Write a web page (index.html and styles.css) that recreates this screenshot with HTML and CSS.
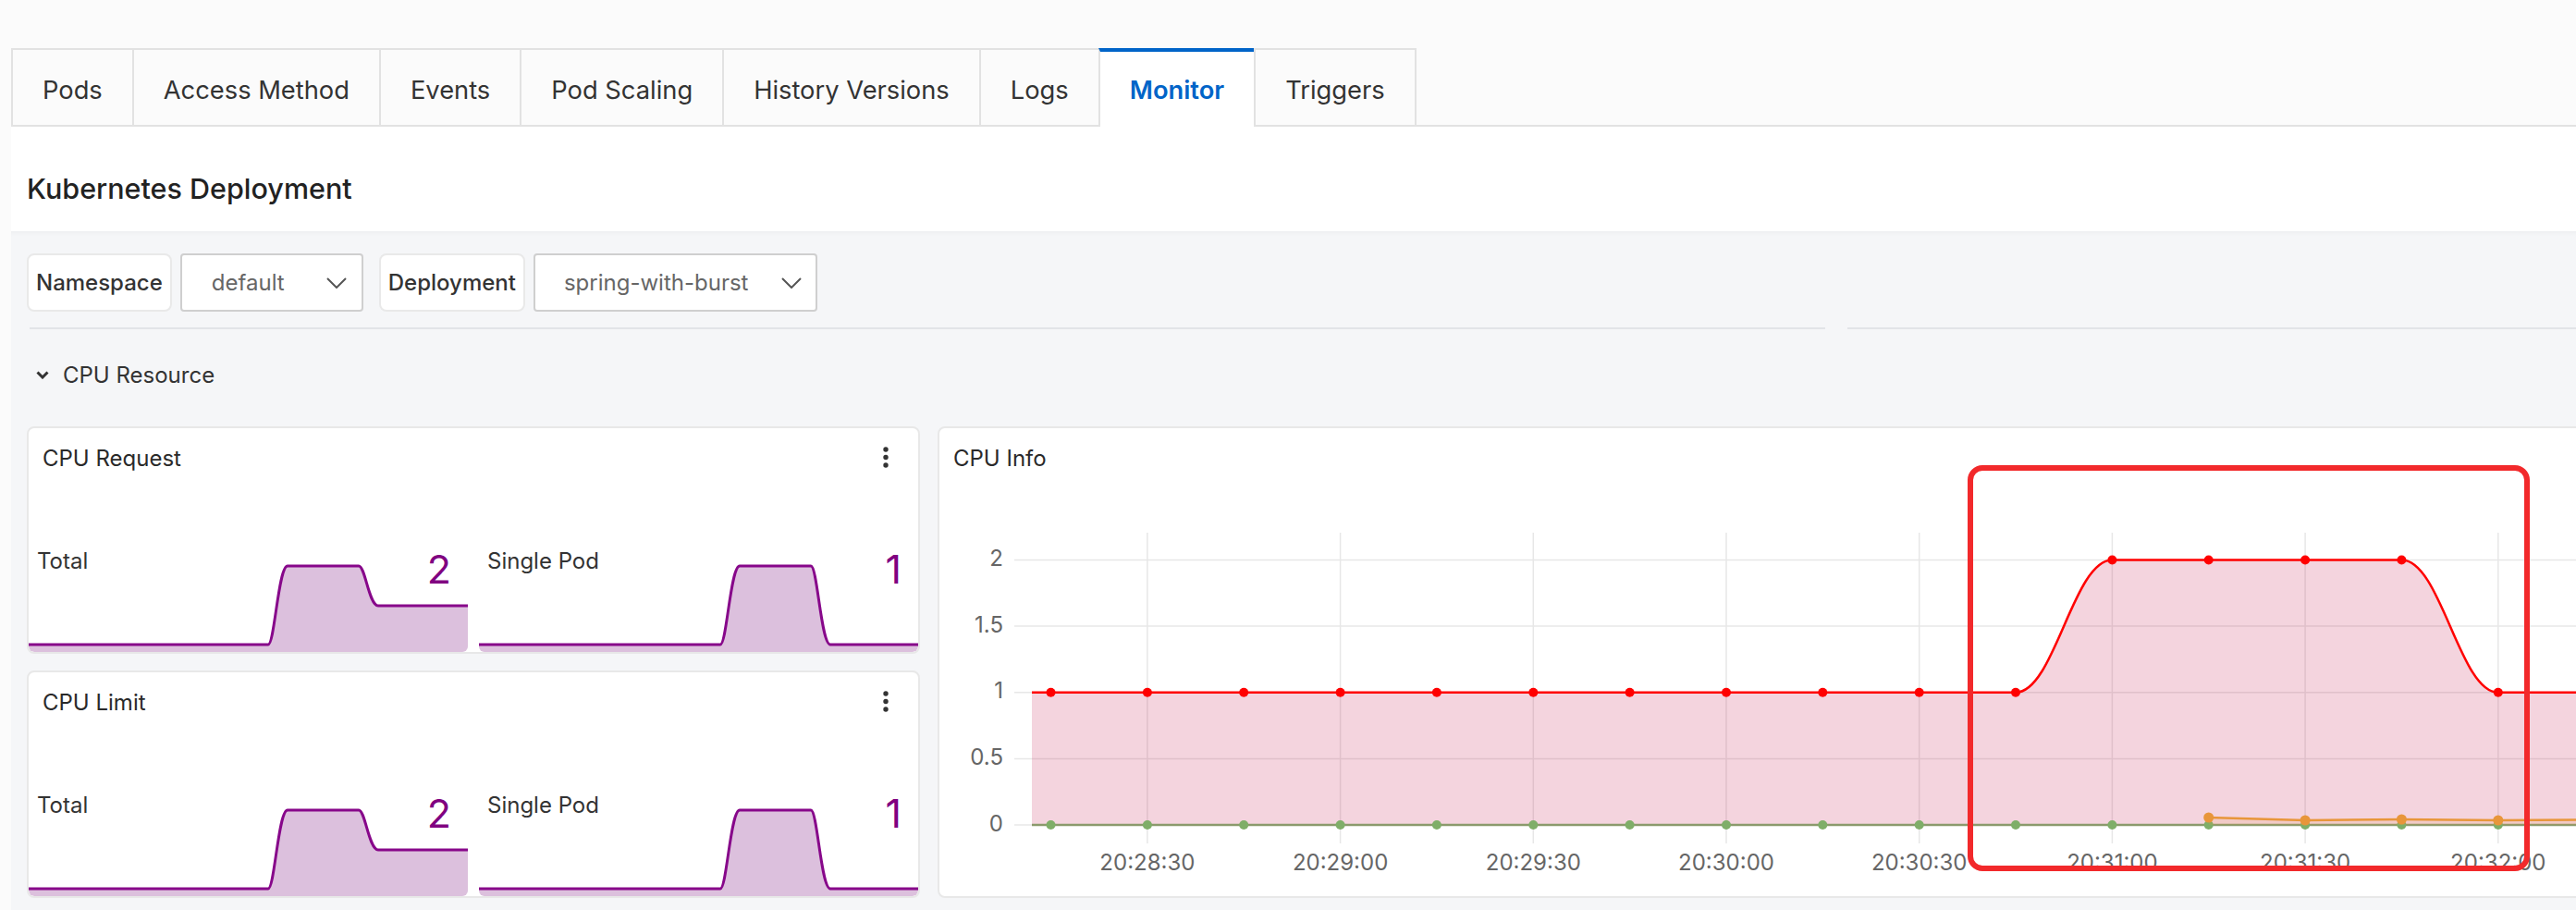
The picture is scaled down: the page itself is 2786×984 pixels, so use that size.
FILE: index.html
```html
<!DOCTYPE html>
<html lang="en">
<head>
<meta charset="utf-8">
<title>Monitor</title>
<link rel="stylesheet" href="styles.css">
</head>
<body>
<div class="page">
  <nav class="tabs">
    <div class="tab">Pods</div>
    <div class="tab">Access Method</div>
    <div class="tab">Events</div>
    <div class="tab">Pod Scaling</div>
    <div class="tab">History Versions</div>
    <div class="tab">Logs</div>
    <div class="tab active">Monitor</div>
    <div class="tab">Triggers</div>
  </nav>
  <section class="panel">
    <header class="panel-head"><h1>Kubernetes Deployment</h1></header>
    <div class="panel-body">
      <div class="filters">
        <div class="flabel">Namespace</div>
        <div class="select sel-ns"><span>default</span><svg class="chev" viewBox="0 0 22 12"><path d="M1 1 L11 11 L21 1"/></svg></div>
        <div class="flabel gap-left">Deployment</div>
        <div class="select sel-dep"><span>spring-with-burst</span><svg class="chev" viewBox="0 0 22 12"><path d="M1 1 L11 11 L21 1"/></svg></div>
      </div>
      <div class="divider"><span class="seg seg-a"></span><span class="seg seg-b"></span></div>
      <div class="section-title"><svg class="sec-chev" viewBox="0 0 14 9"><path d="M1.5 1.5 L7 7 L12.5 1.5"/></svg><span>CPU Resource</span></div>
      <div class="cards">
        <div class="col">
          <div class="card stat">
            <div class="card-head"><span class="card-title">CPU Request</span><svg class="kebab" viewBox="0 0 6 24"><circle cx="3" cy="3" r="2.7"/><circle cx="3" cy="11.5" r="2.7"/><circle cx="3" cy="20" r="2.7"/></svg></div>
            <div class="stat-body">
              <div class="spark">
                <svg class="spark-svg" viewBox="0 0 475 120" preserveAspectRatio="none">
                  <path class="sp-fill" d="M0 112 H259 C266 112 270 27 280 27 H357 C364 27 368 70 378 70 H475 V120 H0 Z"/>
                  <path class="sp-line" d="M0 112 H259 C266 112 270 27 280 27 H357 C364 27 368 70 378 70 H475"/>
                </svg>
                <span class="spark-label">Total</span>
                <span class="spark-num">2</span>
              </div>
              <div class="spark">
                <svg class="spark-svg" viewBox="0 0 475 120" preserveAspectRatio="none">
                  <path class="sp-fill" d="M0 112 H261 C268 112 272 27 282 27 H359 C366 27 370 112 380 112 H475 V120 H0 Z"/>
                  <path class="sp-line" d="M0 112 H261 C268 112 272 27 282 27 H359 C366 27 370 112 380 112 H475"/>
                </svg>
                <span class="spark-label">Single Pod</span>
                <span class="spark-num">1</span>
              </div>
            </div>
          </div>
          <div class="card stat">
            <div class="card-head"><span class="card-title">CPU Limit</span><svg class="kebab" viewBox="0 0 6 24"><circle cx="3" cy="3" r="2.7"/><circle cx="3" cy="11.5" r="2.7"/><circle cx="3" cy="20" r="2.7"/></svg></div>
            <div class="stat-body">
              <div class="spark">
                <svg class="spark-svg" viewBox="0 0 475 120" preserveAspectRatio="none">
                  <path class="sp-fill" d="M0 112 H259 C266 112 270 27 280 27 H357 C364 27 368 70 378 70 H475 V120 H0 Z"/>
                  <path class="sp-line" d="M0 112 H259 C266 112 270 27 280 27 H357 C364 27 368 70 378 70 H475"/>
                </svg>
                <span class="spark-label">Total</span>
                <span class="spark-num">2</span>
              </div>
              <div class="spark">
                <svg class="spark-svg" viewBox="0 0 475 120" preserveAspectRatio="none">
                  <path class="sp-fill" d="M0 112 H261 C268 112 272 27 282 27 H359 C366 27 370 112 380 112 H475 V120 H0 Z"/>
                  <path class="sp-line" d="M0 112 H261 C268 112 272 27 282 27 H359 C366 27 370 112 380 112 H475"/>
                </svg>
                <span class="spark-label">Single Pod</span>
                <span class="spark-num">1</span>
              </div>
            </div>
          </div>
        </div>
        <div class="card info">
          <div class="card-head"><span class="card-title">CPU Info</span></div>
          <svg class="chart" viewBox="0 0 1896 442" width="1896" height="442">
            <g class="hgrid">
              <line x1="81" y1="78.5" x2="1896" y2="78.5"/>
              <line x1="81" y1="150.1" x2="1896" y2="150.1"/>
              <line x1="81" y1="221.75" x2="1896" y2="221.75"/>
              <line x1="81" y1="293.4" x2="1896" y2="293.4"/>
              <line x1="81" y1="365" x2="1896" y2="365"/>
            </g>
            <g class="vgrid">
              <line x1="224.9" y1="49" x2="224.9" y2="385"/>
              <line x1="433.6" y1="49" x2="433.6" y2="385"/>
              <line x1="642.3" y1="49" x2="642.3" y2="385"/>
              <line x1="851" y1="49" x2="851" y2="385"/>
              <line x1="1059.7" y1="49" x2="1059.7" y2="385"/>
              <line x1="1268.4" y1="49" x2="1268.4" y2="385"/>
              <line x1="1477.1" y1="49" x2="1477.1" y2="385"/>
              <line x1="1685.8" y1="49" x2="1685.8" y2="385"/>
              <line x1="1894.5" y1="49" x2="1894.5" y2="385"/>
            </g>
            <g class="ylab">
              <text x="69" y="78.5">2</text>
              <text x="69" y="150.1">1.5</text>
              <text x="69" y="221.75">1</text>
              <text x="69" y="293.4">0.5</text>
              <text x="69" y="365">0</text>
            </g>
            <g class="xlab">
              <text x="224.9" y="407">20:28:30</text>
              <text x="433.6" y="407">20:29:00</text>
              <text x="642.3" y="407">20:29:30</text>
              <text x="851" y="407">20:30:00</text>
              <text x="1059.7" y="407">20:30:30</text>
              <text x="1268.4" y="407">20:31:00</text>
              <text x="1477.1" y="407">20:31:30</text>
              <text x="1685.8" y="407">20:32:00</text>
            </g>
            <path class="red-fill" d="M100 221.75 H1164 C1206 221.75 1226 78.5 1268.4 78.5 H1581.4 C1624 78.5 1644 221.75 1685.8 221.75 H1896 V365 H100 Z"/>
            <path class="red-line" d="M100 221.75 H1164 C1206 221.75 1226 78.5 1268.4 78.5 H1581.4 C1624 78.5 1644 221.75 1685.8 221.75 H1896"/>
            <path class="green-line" d="M100 365 H1896"/>
            <g class="green-pts">
              <circle cx="120.5" cy="365" r="5"/><circle cx="224.9" cy="365" r="5"/><circle cx="329.2" cy="365" r="5"/><circle cx="433.6" cy="365" r="5"/><circle cx="537.9" cy="365" r="5"/><circle cx="642.3" cy="365" r="5"/><circle cx="746.6" cy="365" r="5"/><circle cx="851" cy="365" r="5"/><circle cx="955.3" cy="365" r="5"/><circle cx="1059.7" cy="365" r="5"/><circle cx="1164" cy="365" r="5"/><circle cx="1268.4" cy="365" r="5"/><circle cx="1372.7" cy="365" r="5"/><circle cx="1477.1" cy="365" r="5"/><circle cx="1581.4" cy="365" r="5"/><circle cx="1685.8" cy="365" r="5"/>
            </g>
            <path class="orange-fill" d="M1372.7 357 L1477.1 360 L1581.4 359 L1685.8 360 L1896 359 V365 H1372.7 Z"/>
            <path class="orange-line" d="M1372.7 357 L1477.1 360 L1581.4 359 L1685.8 360 L1896 359"/>
            <g class="orange-pts">
              <circle cx="1372.7" cy="357" r="5.5"/><circle cx="1477.1" cy="360" r="5.5"/><circle cx="1581.4" cy="359" r="5.5"/><circle cx="1685.8" cy="360" r="5.5"/>
            </g>
            <g class="red-pts">
              <circle cx="120.5" cy="221.75" r="5"/><circle cx="224.9" cy="221.75" r="5"/><circle cx="329.2" cy="221.75" r="5"/><circle cx="433.6" cy="221.75" r="5"/><circle cx="537.9" cy="221.75" r="5"/><circle cx="642.3" cy="221.75" r="5"/><circle cx="746.6" cy="221.75" r="5"/><circle cx="851" cy="221.75" r="5"/><circle cx="955.3" cy="221.75" r="5"/><circle cx="1059.7" cy="221.75" r="5"/><circle cx="1164" cy="221.75" r="5"/><circle cx="1268.4" cy="78.5" r="5"/><circle cx="1372.7" cy="78.5" r="5"/><circle cx="1477.1" cy="78.5" r="5"/><circle cx="1581.4" cy="78.5" r="5"/><circle cx="1685.8" cy="221.75" r="5"/>
            </g>
          </svg>
          <div class="highlight"></div>
        </div>
      </div>
    </div>
  </section>
</div>
</body>
</html>
```

FILE: styles.css
```css
* { box-sizing: border-box; }

html, body {
  margin: 0;
  width: 2786px;
  height: 984px;
  overflow: hidden;
}

body {
  background: #fbfbfb;
  font-family: Inter, "Liberation Sans", Arial, sans-serif;
  color: #333;
}

.page {
  padding-top: 52px;
  padding-left: 12px;
}

/* Tabs */
.tabs {
  display: flex;
  height: 85px;
  box-shadow: inset 0 -2px 0 #e2e2e2;
}

.tab {
  height: 85px;
  display: flex;
  align-items: center;
  padding: 0 32px;
  border: 2px solid #e2e2e2;
  border-bottom: none;
  margin-left: -2px;
  font-size: 27.3px;
  color: #333;
  white-space: nowrap;
  padding-top: 4px;
}

.tab:first-child { margin-left: 0; }

.tab.active {
  background: #fff;
  border-top: 4px solid #0064c8;
  color: #0064c8;
  font-weight: 600;
  padding-top: 2px;
}

/* Panel */
.panel-head {
  height: 113px;
  background: #fff;
  display: flex;
  align-items: center;
  padding: 19px 0 0 17px;
}

.panel-head h1 {
  margin: 0;
  font-size: 30.5px;
  font-weight: 500;
  color: #222;
}

.panel-body {
  background: #f5f6f8;
  height: 734px;
  padding: 24px 0 0 17px;
  box-shadow: inset 0 7px 7px -7px rgba(0, 0, 0, 0.06);
}

/* Filters */
.filters {
  display: flex;
  gap: 9px;
  height: 63px;
}

.flabel {
  height: 63px;
  display: flex;
  align-items: center;
  padding: 0 8px;
  background: #fff;
  border: 2px solid #e9e9e9;
  border-radius: 8px;
  font-size: 24px;
  font-weight: 500;
  color: #333;
}

.gap-left { margin-left: 8px; }

.select {
  height: 63px;
  display: flex;
  align-items: center;
  justify-content: space-between;
  background: #fff;
  border: 2px solid #cfcfcf;
  border-radius: 4px;
  font-size: 24px;
  color: #666;
}

.sel-ns { width: 198px; padding: 0 16px 0 32px; }
.sel-dep { width: 307px; padding: 0 15px 0 31px; }

.chev {
  width: 22px;
  height: 12px;
  fill: none;
  stroke: #555;
  stroke-width: 2;
}

/* divider */
.divider {
  display: flex;
  gap: 24px;
  margin: 17px 0 0 3px;
}

.seg {
  height: 2px;
  background: #e2e4e8;
}

.seg-a { width: 1942px; }
.seg-b { flex: 1; }

.section-title {
  display: flex;
  align-items: center;
  gap: 15px;
  height: 30px;
  margin-top: 34px;
  padding-left: 10px;
  font-size: 24px;
  color: #333;
}

.sec-chev {
  width: 14px;
  height: 9px;
  fill: none;
  stroke: #333;
  stroke-width: 3;
}

/* Cards */
.cards {
  display: flex;
  gap: 19px;
  margin-top: 41px;
  align-items: flex-start;
}

.col {
  display: flex;
  flex-direction: column;
  gap: 18px;
  width: 966px;
  flex-shrink: 0;
}

.card {
  background: #fff;
  border: 2px solid #e8e8e8;
  border-radius: 8px;
}

.stat {
  height: 246px;
  display: flex;
  flex-direction: column;
  overflow: hidden;
}

.card-head {
  height: 64px;
  display: flex;
  align-items: center;
  justify-content: space-between;
  padding: 0 32px 0 15px;
}

.card-title {
  font-size: 24px;
  font-weight: 400;
  color: #2a2a2a;
}

.kebab {
  width: 6px;
  height: 24px;
  fill: #333;
}

.stat-body {
  flex: 1;
  display: flex;
  align-items: flex-end;
  gap: 12px;
}

.spark {
  flex: 1;
  height: 120px;
  display: grid;
  border-radius: 0 0 6px 6px;
  overflow: hidden;
}

.spark > * { grid-area: 1 / 1; }

.spark-svg {
  width: 100%;
  height: 120px;
  display: block;
}

.sp-fill { fill: #dcc0dd; }

.sp-line {
  fill: none;
  stroke: #87078a;
  stroke-width: 3;
}

.spark-label {
  align-self: start;
  justify-self: start;
  margin: 8px 0 0 9px;
  font-size: 24px;
  line-height: 1.2;
  color: #333;
}

.spark-num {
  align-self: start;
  justify-self: end;
  margin: 9px 18px 0 0;
  font-size: 43px;
  line-height: 1;
  font-weight: 400;
  color: #800080;
}

/* CPU info */
.info {
  position: relative;
  width: 1900px;
  height: 510px;
  flex-shrink: 0;
}

.chart {
  display: block;
  font-family: Inter, "Liberation Sans", Arial, sans-serif;
}

.hgrid line, .vgrid line {
  stroke: #e7e7e7;
  stroke-width: 1.5;
}

.ylab text {
  font-size: 24px;
  fill: #666;
  text-anchor: end;
  dominant-baseline: middle;
}

.xlab text {
  font-size: 24px;
  fill: #666;
  text-anchor: middle;
  dominant-baseline: middle;
}

.red-fill { fill: rgba(200, 40, 90, 0.2); }

.red-line {
  fill: none;
  stroke: #ff0000;
  stroke-width: 2.5;
}

.red-pts circle { fill: #ff0000; }

.green-line {
  fill: none;
  stroke: #8b9a6c;
  stroke-width: 2.5;
}

.green-pts circle { fill: #7fae68; }

.orange-fill { fill: rgba(232, 150, 58, 0.15); }

.orange-line {
  fill: none;
  stroke: #e8963a;
  stroke-width: 2.5;
}

.orange-pts circle { fill: #e8963a; }

.highlight {
  position: absolute;
  left: 1112px;
  top: 40px;
  width: 608px;
  height: 439px;
  border: 6px solid #f2292b;
  border-radius: 16px;
}
```
